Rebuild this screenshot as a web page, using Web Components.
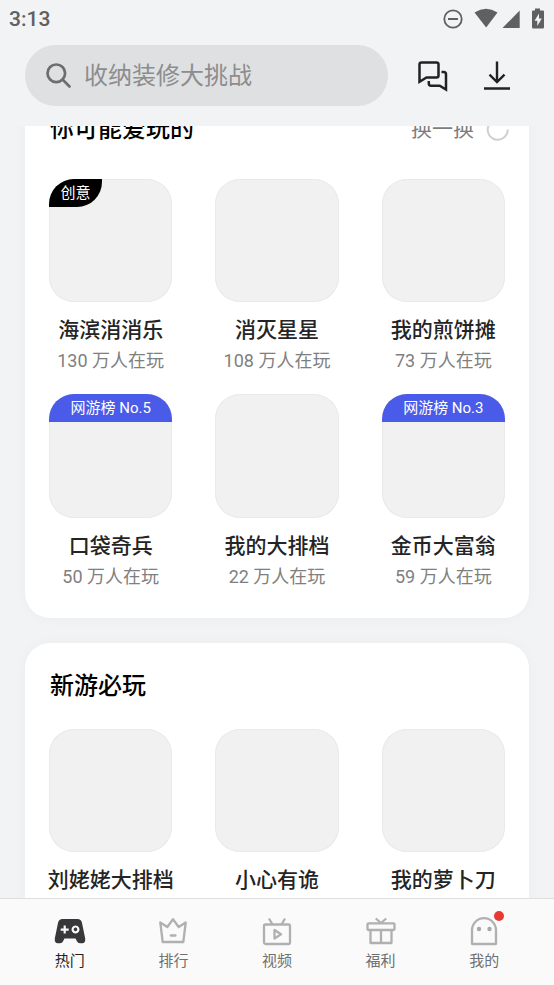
<!DOCTYPE html>
<html lang="zh-CN">
<head>
<meta charset="utf-8">
<meta name="viewport" content="width=device-width, initial-scale=1">
<title>热门</title>
<style>
html, body { height: 100%; margin: 0; }
body { background: #f2f3f5; color: #242424; font-family: Roboto, "Noto Sans CJK SC", sans-serif; }
</style>
</head>
<body>
<game-center>
  <status-bar slot="top" time="3:13"></status-bar>
  <search-header slot="top" hint="收纳装修大挑战"></search-header>

  <game-section class="first" heading="你可能爱玩的" action="换一换">
    <game-item name="海滨消消乐" players="130 万人在玩" tag="创意"></game-item>
    <game-item name="消灭星星" players="108 万人在玩"></game-item>
    <game-item name="我的煎饼摊" players="73 万人在玩"></game-item>
    <game-item name="口袋奇兵" players="50 万人在玩" rank="网游榜 No.5"></game-item>
    <game-item name="我的大排档" players="22 万人在玩"></game-item>
    <game-item name="金币大富翁" players="59 万人在玩" rank="网游榜 No.3"></game-item>
  </game-section>
  <game-section heading="新游必玩">
    <game-item name="刘姥姥大排档"></game-item>
    <game-item name="小心有诡"></game-item>
    <game-item name="我的萝卜刀"></game-item>
  </game-section>

  <tab-bar slot="bottom">
    <tab-item label="热门" active>
      <svg width="32" height="32" viewBox="0 0 32 32"><path fill="#38383a" fill-rule="evenodd" d="M8.500 4h15q3.600 0 4.400 3.600l3.300 16q.4 4.700-3 4.700h-2.300q-2 0-3-2l-1.300-2.900H10.400L9.100 26.300q-1 2-3 2H3.800q-3.400 0-3-4.700l3.300-16Q4.900 4 8.500 4ZM9.600 10.600v2.900H6.700v2.200h2.900v2.900h2.200v-2.900h2.900v-2.200h-2.900v-2.900ZM21.500 10.400a4 4 0 1 0 .01 0ZM21.500 12.600a1.800 1.800 0 1 1-.01 0Z"/></svg>
    </tab-item>
    <tab-item label="排行">
      <svg width="32" height="32" viewBox="0 0 32 32" fill="none" stroke="#b0b0b0" stroke-width="2.300" stroke-linejoin="round" stroke-linecap="round"><path d="M3.300 7.500 10.300 12 16 4.200 21.700 12 28.700 7.500 26.300 27H5.700ZM13.800 20.500h4.700"/></svg>
    </tab-item>
    <tab-item label="视频">
      <svg width="32" height="32" viewBox="0 0 32 32" fill="none" stroke="#b0b0b0" stroke-width="2.300" stroke-linejoin="round"><rect x="3" y="9.500" width="26" height="19.500" rx="1.500"/><path d="m8 3.500 3.500 6M24 3.500l-3.500 6M13.500 15v8.500l6.500-4.200Z"/></svg>
    </tab-item>
    <tab-item label="福利">
      <svg width="32" height="32" viewBox="0 0 32 32" fill="none" stroke="#b0b0b0" stroke-width="2.300" stroke-linejoin="round"><rect x="2.500" y="8.300" width="27" height="6.700" rx="1"/><path d="M5.500 15v13h21V15M16 15v13M10.800 3.500 16 8l5.200-4.500"/></svg>
    </tab-item>
    <tab-item label="我的" dot>
      <svg width="32" height="32" viewBox="0 0 32 32" fill="none" stroke="#b0b0b0" stroke-width="2.300" stroke-linejoin="round"><path d="M4 29V15.200a12 12 0 0 1 24 0V29Z"/><g fill="#a8a8a8" stroke="none"><circle cx="11" cy="14" r="2.200"/><circle cx="21.500" cy="14" r="2.200"/></g></svg>
    </tab-item>
  </tab-bar>
</game-center>

<script>
class Base extends HTMLElement {
  connectedCallback() {
    if (this.shadowRoot) return;
    this.attachShadow({ mode: 'open' }).innerHTML = this.render();
  }
  attr(name) { return this.getAttribute(name) || ''; }
}

customElements.define('game-center', class extends Base {
  render() {
    return `<style>
      :host { display: flex; flex-direction: column; height: 100vh; }
      main { flex: 1; min-height: 0; overflow-y: auto; scrollbar-width: none; }
      .list { display: flex; flex-direction: column; gap: 25px; padding: 0 25px 25px; }
    </style>
    <slot name="top"></slot>
    <main><div class="list"><slot></slot></div></main>
    <slot name="bottom"></slot>`;
  }
});

customElements.define('status-bar', class extends Base {
  render() {
    return `<style>
      :host { display: flex; align-items: center; justify-content: space-between; height: 38px; padding: 0 9px; color: #5f6062; font-size: 21px; font-weight: 500; }
      svg { display: block; }
    </style>
    <span>${this.attr('time')}</span>
    <svg width="104" height="24" viewBox="0 0 104 24" fill="#5f6062">
      <circle cx="12" cy="12" r="8.700" fill="none" stroke="#5f6062" stroke-width="1.800"/><path d="M7 11h10v2H7Z"/>
      <path d="M33.500 5.500Q45 -1.800 56.500 5.500L45.200 20.500Z"/>
      <path d="M61.500 21 78.700 3.500V21Z"/>
      <path fill-rule="evenodd" d="M94 1.500h5v2h3q1 0 1 1v15.500q0 1.500-1 1.500H92q-1 0-1-1.500V4.500q0-1 1-1h2ZM98 6.500l-4.500 7.200h2.800V19l4.500-7.500H98Z"/>
    </svg>`;
  }
});

customElements.define('search-header', class extends Base {
  render() {
    return `<style>
      :host { display: flex; align-items: center; padding: 7px 25px 20px; }
      label { flex: 1; min-width: 0; display: flex; align-items: center; gap: 12px; box-sizing: border-box; height: 61px; margin-right: 13px; padding: 0 20px; border-radius: 31px; background: #dfe0e2; }
      input { flex: 1; min-width: 0; padding: 0; border: 0; outline: 0; background: none; font: 24px/36px Roboto, "Noto Sans CJK SC", sans-serif; color: #242424; }
      input::placeholder { color: #8c8d8e; opacity: 1; }
      button { width: 64px; height: 61px; padding: 0; border: 0; background: none; display: grid; place-items: center; }
      svg { display: block; flex: none; }
    </style>
    <label><svg width="27" height="27" viewBox="0 0 27 27" fill="none" stroke="#6c6d6e" stroke-width="2.700" stroke-linecap="round"><circle cx="11.300" cy="11.300" r="8.800"/><path d="m17.800 17.800 6.700 6.700"/></svg>
      <input type="search" aria-label="搜索" placeholder="${this.attr('hint')}"></label>
    <button type="button" aria-label="消息"><svg width="32" height="32" viewBox="0 0 32 32" fill="none" stroke="#222" stroke-width="2.500"><path d="M4.500 2.500h15q2 0 2 2v11q0 2-2 2H9.500l-7 4.200V4.500q0-2 2-2Z"/><path d="M24.500 12h2.200q2.300 0 2.300 2.300V29.500l-6.300-3.800H14q-2.200 0-2.200-2.200V21"/></svg></button>
    <button type="button" aria-label="下载"><svg width="32" height="32" viewBox="0 0 32 32" fill="none" stroke="#222" stroke-width="2.400"><path d="M16 1.500v20M8.500 14.700l7.500 7.300 7.500-7.300M3 28.500h26"/></svg></button>`;
  }
});

customElements.define('game-section', class extends Base {
  render() {
    const action = this.attr('action');
    return `<style>
      :host { display: flex; flex-direction: column; gap: 21px; padding: 21px 24px 29px; border-radius: 25px; background: #fff; box-shadow: 0 0 14px rgba(0,0,0,.03); }
      :host(.first) { gap: 28px; }
      header { display: flex; align-items: center; justify-content: space-between; height: 44px; }
      h2 { margin: 0; padding-left: 1px; font-size: 24px; line-height: 36px; font-weight: 500; color: #000; }
      button { display: flex; align-items: center; gap: 12px; padding: 0; margin-right: -5px; border: 0; background: none; font: 21px/30px Roboto, "Noto Sans CJK SC", sans-serif; color: #7c7c7c; }
      .grid { display: grid; grid-template-columns: repeat(3, minmax(0, 1fr)); gap: 21px 43px; }
    </style>
    <header><h2>${this.attr('heading')}</h2>${action ? `<button type="button">${action}<svg width="24" height="24" viewBox="0 0 24 24" fill="none" stroke="#cfcfcf" stroke-width="2"><path d="M21.700 12.500A10 10 0 1 1 17 4.300"/></svg></button>` : ''}</header>
    <div class="grid"><slot></slot></div>`;
  }
});

customElements.define('game-item', class extends Base {
  render() {
    const tag = this.attr('tag'), rank = this.attr('rank'), players = this.attr('players');
    return `<style>
      :host { display: flex; flex-direction: column; align-items: center; white-space: nowrap; }
      .tile { width: 100%; aspect-ratio: 1; border-radius: 25px; overflow: hidden; background: #f1f1f1; box-shadow: inset 0 0 0 1px #e9e9e9; margin-bottom: 13px; }
      .tag, .rank { color: #fff; font-size: 15px; line-height: 28px; text-align: center; }
      .tag { width: 53px; background: #000; border-bottom-right-radius: 25px; }
      .rank { background: #4a5be9; }
      h3 { margin: 0; font-size: 21px; line-height: 30px; font-weight: 500; }
      p { margin: 4px 0 0; font-size: 18px; line-height: 24px; color: #7f7f7f; }
    </style>
    <div class="tile">${tag ? `<div class="tag">${tag}</div>` : ''}${rank ? `<div class="rank">${rank}</div>` : ''}</div>
    <h3>${this.attr('name')}</h3>${players ? `<p>${players}</p>` : ''}`;
  }
});

customElements.define('tab-bar', class extends Base {
  render() {
    return `<style>
      :host { display: block; border-top: 1px solid #dedede; background: #fafafa; }
      nav { display: flex; padding: 16px 18px 12px; }
    </style><nav><slot></slot></nav>`;
  }
});

customElements.define('tab-item', class extends Base {
  render() {
    return `<style>
      :host { flex: 1; display: block; color: #707070; font-size: 15px; line-height: 24px; }
      :host([active]) { color: #1f1f1f; }
      button { width: 100%; display: flex; flex-direction: column; align-items: center; gap: 2px; padding: 0; border: 0; background: none; font: inherit; color: inherit; }
      .icon { position: relative; display: block; height: 32px; }
      .dot { position: absolute; top: -4px; right: -4px; width: 10px; height: 10px; border-radius: 50%; background: #e83a32; }
      ::slotted(svg) { display: block; }
    </style>
    <button type="button"><span class="icon"><slot></slot>${this.hasAttribute('dot') ? '<i class="dot"></i>' : ''}</span><span>${this.attr('label')}</span></button>`;
  }
});

/* Open with the list already scrolled a little way down. */
document.querySelector('game-center').shadowRoot.querySelector('main').scrollTop = 40;
</script>
</body>
</html>
